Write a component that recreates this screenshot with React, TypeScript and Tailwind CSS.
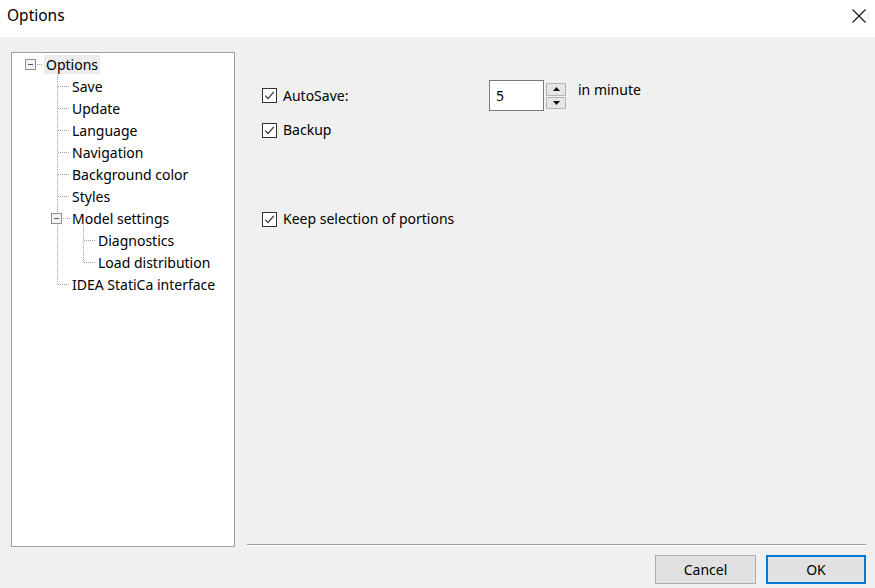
import * as React from "react";

type TreeRow = {
  label: string;
  level: number;
  selected?: boolean;
};

const treeRows: TreeRow[] = [
  { label: "Options", level: 0, selected: true },
  { label: "Save", level: 1 },
  { label: "Update", level: 1 },
  { label: "Language", level: 1 },
  { label: "Navigation", level: 1 },
  { label: "Background color", level: 1 },
  { label: "Styles", level: 1 },
  { label: "Model settings", level: 1 },
  { label: "Diagnostics", level: 2 },
  { label: "Load distribution", level: 2 },
  { label: "IDEA StatiCa interface", level: 1 },
];

const indentByLevel: Record<number, string> = {
  0: "pl-[32px]",
  1: "pl-[58px]",
  2: "pl-[84px]",
};

function rowY(i: number) {
  return 11.5 + 22 * i;
}

function TreeLines() {
  const dot = { stroke: "#a0a0a0", strokeWidth: 1, strokeDasharray: "1 1" };
  const level1 = [1, 2, 3, 4, 5, 6, 10];
  return (
    <svg
      className="pointer-events-none absolute left-0 top-0"
      width={222}
      height={260}
      shapeRendering="crispEdges"
    >
      <line x1={23} y1={rowY(0)} x2={31} y2={rowY(0)} {...dot} />
      <line x1={45.5} y1={22} x2={45.5} y2={rowY(10)} {...dot} />
      {level1.map((i) => (
        <line key={i} x1={46} y1={rowY(i)} x2={58} y2={rowY(i)} {...dot} />
      ))}
      <line x1={51} y1={rowY(7)} x2={58} y2={rowY(7)} {...dot} />
      <line x1={71.5} y1={rowY(7) + 6} x2={71.5} y2={rowY(9)} {...dot} />
      {[8, 9].map((i) => (
        <line key={i} x1={72} y1={rowY(i)} x2={84} y2={rowY(i)} {...dot} />
      ))}
      <Expander x={13.5} y={rowY(0) - 5} />
      <Expander x={39.5} y={rowY(7) - 5} />
    </svg>
  );
}

function Expander({ x, y }: { x: number; y: number }) {
  return (
    <g>
      <rect x={x} y={y} width={10} height={10} fill="#f4f4f4" stroke="#8f8f8f" />
      <line x1={x + 2.5} y1={y + 5} x2={x + 7.5} y2={y + 5} stroke="#3c5a86" strokeWidth={1} />
    </g>
  );
}

function CheckBox() {
  return (
    <span className="flex h-[15px] w-[15px] shrink-0 items-center justify-center border border-[#333333] bg-white">
      <svg width="13" height="13" viewBox="0 0 13 13">
        <path d="M2.2 6.6 L5 9.6 L10.8 2.8" fill="none" stroke="#333333" strokeWidth="1.3" />
      </svg>
    </span>
  );
}

function CheckRow({ label, className }: { label: string; className?: string }) {
  return (
    <label className={`flex items-center gap-[6px] ${className ?? ""}`}>
      <CheckBox />
      <span className="leading-[20px]">{label}</span>
    </label>
  );
}

function SpinButtons() {
  return (
    <div className="mt-[3px] flex h-[26px] w-[20px] flex-col gap-px self-start">
      <div className="flex flex-1 items-center justify-center border border-[#b5b5b5] bg-[#e6e6e6]">
        <svg width="7" height="4" viewBox="0 0 7 4">
          <path d="M0 4 L3.5 0 L7 4 Z" fill="#111" />
        </svg>
      </div>
      <div className="flex flex-1 items-center justify-center border border-[#b5b5b5] bg-[#e6e6e6]">
        <svg width="7" height="4" viewBox="0 0 7 4">
          <path d="M0 0 L7 0 L3.5 4 Z" fill="#111" />
        </svg>
      </div>
    </div>
  );
}

export default function App() {
  return (
    <div className="flex h-[588px] w-[875px] flex-col overflow-hidden bg-[#f0f0f0] font-['Noto_Sans',sans-serif] text-[14px] text-black">
      <div className="flex h-[37px] shrink-0 items-start justify-between bg-white pl-[7px] pr-[9px] pt-[5px]">
        <span className="text-[15.5px] leading-[20px]">Options</span>
        <svg width="14" height="14" viewBox="0 0 14 14" className="mt-[4px]">
          <path d="M0.5 0.5 L13.5 13.5 M13.5 0.5 L0.5 13.5" stroke="#111" strokeWidth="1.1" />
        </svg>
      </div>

      <div className="mt-[15px] flex">
        <div className="relative ml-[11px] h-[495px] w-[224px] border border-[#a0a0a0] bg-white">
          <TreeLines />
          {treeRows.map((row) => (
            <div key={row.label} className={`flex h-[22px] items-center ${indentByLevel[row.level]}`}>
              <span
                className={`whitespace-nowrap px-[2px] leading-[19px] ${row.selected ? "bg-[#ececec]" : ""}`}
              >
                {row.label}
              </span>
            </div>
          ))}
        </div>

        <div className="ml-[12px] flex h-[495px] w-[620px] flex-col pl-[15px]">
          <div className="mt-[28px] flex h-[31px] items-center">
            <CheckRow label="AutoSave:" className="w-[227px]" />
            <div className="flex h-[31px] w-[55px] items-center border border-[#7a7a7a] bg-white pl-[6px]">
              5
            </div>
            <div className="ml-[2px] flex self-stretch">
              <SpinButtons />
            </div>
            <span className="ml-[12px] self-start leading-[20px]">in minute</span>
          </div>
          <CheckRow label="Backup" className="mt-[9px]" />
          <CheckRow label="Keep selection of portions" className="mt-[69px]" />

          <div className="-ml-[15px] mb-px mt-auto h-[2px] w-[619px] border-b border-t border-b-white border-t-[#a0a0a0]" />
        </div>
      </div>

      <div className="mt-[8px] flex justify-end gap-[10px] pr-[9px]">
        <button
          type="button"
          className="h-[29px] w-[101px] border border-[#adadad] bg-[#e1e1e1] text-[14px]"
        >
          Cancel
        </button>
        <button
          type="button"
          className="h-[29px] w-[100px] border-2 border-[#0078d7] bg-[#e1e1e1] text-[14px]"
        >
          OK
        </button>
      </div>
    </div>
  );
}
